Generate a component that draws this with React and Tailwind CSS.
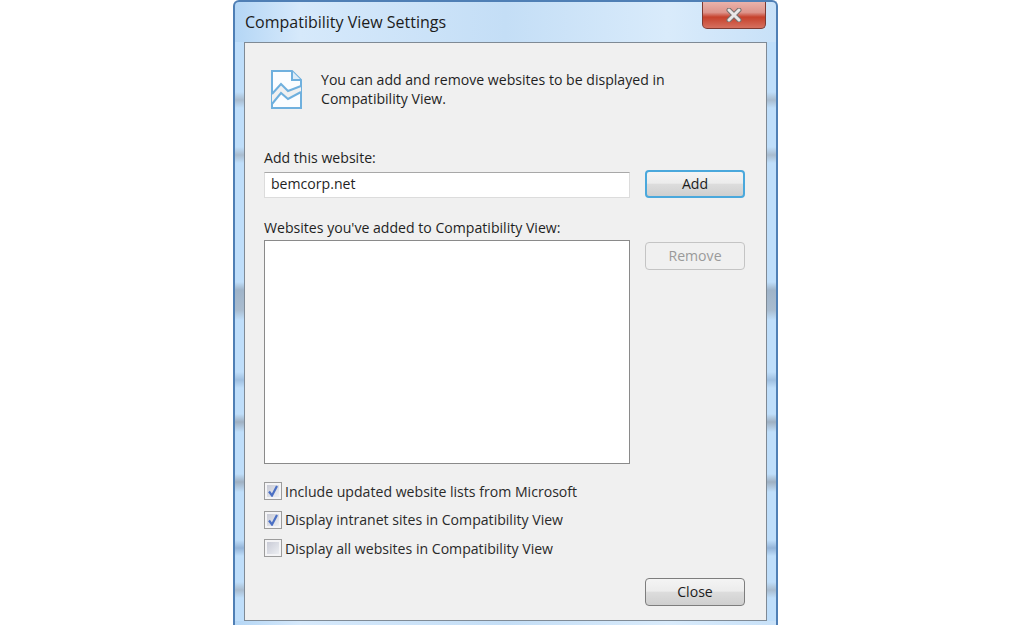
const frameStrip =
  'w-[9px] shrink-0 bg-[linear-gradient(#bfdefa_0px,#bfdefa_50px,#a9bccf_58px,#bfdefa_66px,#bfdefa_105px,#a9bccf_113px,#bfdefa_121px,#bfdefa_240px,#9fb4c9_248px,#a9bccf_268px,#bfdefa_278px,#bfdefa_330px,#9fbfe0_338px,#bfdefa_346px,#bfdefa_372px,#9fb0c2_380px,#bfdefa_390px,#bfdefa_432px,#9fb0c2_440px,#bfdefa_450px,#bfdefa_498px,#94b4d8_506px,#bfdefa_514px,#bfdefa_540px,#a9bccf_548px,#bfdefa_556px)]'

function WinButton({ children, focused, disabled }) {
  const border = focused
    ? 'border-2 border-[#4aa8dc]'
    : disabled
      ? 'border border-[#c4c4c4]'
      : 'border border-[#7d7d7d]'
  const bg = disabled
    ? 'bg-[#f0f0f0] text-[#9a9a9a]'
    : 'bg-[linear-gradient(#f4f4f4_0%,#ececec_46%,#dcdcdc_52%,#cfcfcf_100%)] text-[#1c1c1c]'
  return (
    <button className={`flex h-[28px] w-[100px] items-center justify-center rounded-[4px] text-[14.1px] ${border} ${bg}`}>
      {children}
    </button>
  )
}

function Check({ checked, label }) {
  return (
    <div className="flex h-[28.5px] items-center gap-[3px]">
      <div className="flex h-[18px] w-[18px] items-center justify-center border border-[#9c9c9c] bg-[#f4f4f6] p-[2px]">
        <div className="flex h-full w-full items-center justify-center bg-[linear-gradient(135deg,#c9cbd6,#eceef2)]">
          {checked && (
            <svg viewBox="0 0 12 12" className="h-[12px] w-[12px]">
              <path d="M2 6.5 L5 10.5 L10 1" fill="none" stroke="#4a6fc4" strokeWidth="2.2" />
            </svg>
          )}
        </div>
      </div>
      <span className="text-[14.1px] text-[#2a2a2a]">{label}</span>
    </div>
  )
}

function PageIcon() {
  return (
    <svg viewBox="0 0 31 39" className="h-[39px] w-[31px]" fill="none" stroke="#6fb0de" strokeWidth="2">
      <path d="M1 1 H21 L30 10 V38 H1 Z" fill="#fbfdff" />
      <path d="M21 1 V10 H30" fill="#dcecf8" />
      <path d="M1 24 L10 14 L17 21 L30 16 V22 L17 29 L10 23 L1 34 Z" fill="#f0f0f0" stroke="none" />
      <path d="M1 24 L10 14 L17 21 L30 16" />
      <path d="M1 34 L10 23 L17 29 L30 22" />
    </svg>
  )
}

export default function App() {
  return (
    <div className="h-[625px] w-[1024px] overflow-hidden bg-white pl-[233px] font-['Open_Sans','Noto_Sans',sans-serif]">
      <div className="h-[625px] w-[545px] rounded-t-[6px] border-x-2 border-t-2 border-[#4f7fb5] bg-[linear-gradient(90deg,#b4d6f5_0%,#d6e9fb_12%,#c4def6_50%,#d9ebfb_80%,#c8e1f8_100%)]">
        <div className="flex h-[40px] items-start justify-between pl-[10px] pr-[10px]">
          <div className="mt-[9px] text-[16px] leading-[22px] text-[#1c1c1c]">Compatibility View Settings</div>
          <div className="flex h-[27px] w-[64px] items-center justify-center rounded-b-[5px] border border-t-0 border-[#7d3a32] bg-[linear-gradient(#eab3ab_0%,#dd948b_40%,#c6412c_58%,#d5705f_100%)]">
            <svg viewBox="0 0 16 14" className="h-[14px] w-[16px]">
              <path d="M3 2 L13 12 M13 2 L3 12" stroke="#77706e" strokeWidth="5" strokeLinecap="round" />
              <path d="M3 2 L13 12 M13 2 L3 12" stroke="#e8e8e8" strokeWidth="3" strokeLinecap="round" />
            </svg>
          </div>
        </div>
        <div className="flex">
          <div className={frameStrip} />
          <div className="h-[579px] w-[523px] border border-[#7f8a95] bg-[#f0f0f0] pl-[19px] pr-[21px]">
            <div className="flex h-[75px] items-start pl-[7px] pt-[27px]">
              <PageIcon />
              <p className="ml-[19px] text-[14.1px] leading-[19px] text-[#1f1f1f]">
                You can add and remove websites to be displayed in
                <br />
                Compatibility View.
              </p>
            </div>
            <div className="mt-[30px] text-[14.1px] leading-[20px] text-[#1f1f1f]">Add this website:</div>
            <div className="mt-[2px] flex items-start justify-between">
              <div className="mt-[2px] flex h-[26px] w-[366px] items-center border border-[#dcdcdc] border-t-[#a8a8a8] bg-white pb-[2px] pl-[6px] text-[14.1px] text-[#1f1f1f]">
                bemcorp.net
              </div>
              <WinButton focused>Add</WinButton>
            </div>
            <div className="mt-[20px] text-[14.1px] leading-[20px] text-[#1f1f1f]">Websites you've added to Compatibility View:</div>
            <div className="mt-[2px] flex items-start justify-between">
              <div className="h-[224px] w-[366px] border border-[#8a8a8a] bg-white" />
              <div className="pt-[2px]">
                <WinButton disabled>Remove</WinButton>
              </div>
            </div>
            <div className="mt-[13px]">
              <Check checked label="Include updated website lists from Microsoft" />
              <Check checked label="Display intranet sites in Compatibility View" />
              <Check label="Display all websites in Compatibility View" />
            </div>
            <div className="mt-[15px] flex justify-end">
              <WinButton>Close</WinButton>
            </div>
          </div>
          <div className={frameStrip} />
        </div>
      </div>
    </div>
  )
}
